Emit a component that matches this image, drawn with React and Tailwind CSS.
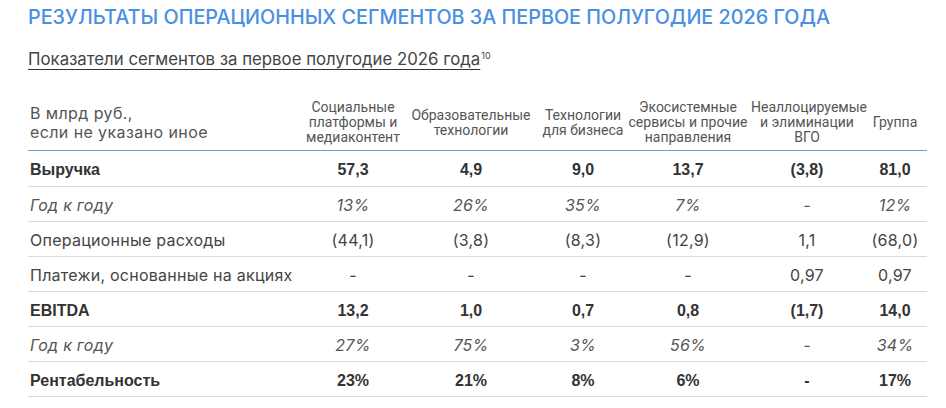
import React from "react";

const cols = "grid grid-cols-[277px_96px_140px_84px_126px_112px_64px]";

const heads = [
  ["Социальные", "платформы и", "медиаконтент"],
  ["Образовательные", "технологии"],
  ["Технологии", "для бизнеса"],
  ["Экосистемные", "сервисы и прочие", "направления"],
  ["Неаллоцируемые", "и элиминации", "ВГО"],
  ["Группа"],
];

const rows = [
  { label: "Выручка", kind: "bold", vals: ["57,3", "4,9", "9,0", "13,7", "(3,8)", "81,0"] },
  { label: "Год к году", kind: "italic", vals: ["13%", "26%", "35%", "7%", "-", "12%"] },
  { label: "Операционные расходы", kind: "plain", vals: ["(44,1)", "(3,8)", "(8,3)", "(12,9)", "1,1", "(68,0)"] },
  { label: "Платежи, основанные на акциях", kind: "plain", vals: ["-", "-", "-", "-", "0,97", "0,97"] },
  { label: "EBITDA", kind: "bold", vals: ["13,2", "1,0", "0,7", "0,8", "(1,7)", "14,0"] },
  { label: "Год к году", kind: "italic", vals: ["27%", "75%", "3%", "56%", "-", "34%"] },
  { label: "Рентабельность", kind: "bold", vals: ["23%", "21%", "8%", "6%", "-", "17%"] },
];

// bold rows use an Arial-width face, the rest a lighter spaced sans
const kindClass = {
  bold: "font-bold text-[#333] font-['Liberation_Sans',Arial,sans-serif] pt-[3px]",
  italic: "italic text-[#555] tracking-[0.25px] pt-[2px]",
  plain: "text-[#444] tracking-[0.25px] pt-[2px]",
};

export default function App() {
  return (
    <div className="w-[946px] h-[408px] overflow-hidden bg-white pl-[28px] font-['Inter',sans-serif]">
      <h1 className="pt-[4px] text-[19.8px] leading-[26px] font-medium text-[#4a90e2] whitespace-nowrap">
        РЕЗУЛЬТАТЫ ОПЕРАЦИОННЫХ СЕГМЕНТОВ ЗА ПЕРВОЕ ПОЛУГОДИЕ 2026 ГОДА
      </h1>

      <p className="mt-[19px] text-[16.8px] leading-[21px] text-[#444] whitespace-nowrap">
        <span className="underline underline-offset-[4px] decoration-[#333]">
          Показатели сегментов за первое полугодие 2026 года
        </span>
        <sup className="text-[9px] ml-[1px] -top-[0.7em]">10</sup>
      </p>

      <div className="mt-[24px] w-[899px]">
        <div className={`${cols} h-[57px] items-center border-b-[1.5px] border-[#6a9fd4]`}>
          <div className="text-[16px] leading-[19px] tracking-[0.4px] text-[#555] pl-[2px] pt-[1px]">
            В млрд руб.,
            <br />
            если не указано иное
          </div>
          {heads.map((h, i) => (
            <div
              key={i}
              className="text-center text-[14px] leading-[15px] text-[#555] whitespace-nowrap font-['Roboto',sans-serif] pt-[1px]"
            >
              {h.map((line, j) => (
                <div key={j}>{line}</div>
              ))}
            </div>
          ))}
        </div>

        {rows.map((r, i) => (
          <div
            key={i}
            className={`${cols} ${i === 0 ? "h-[36px]" : "h-[35px]"} items-center border-b border-[#d9d9d9] text-[16px] ${kindClass[r.kind]}`}
          >
            <div className="pl-[2px] whitespace-nowrap">{r.label}</div>
            {r.vals.map((v, j) => (
              <div key={j} className="text-center">
                {v}
              </div>
            ))}
          </div>
        ))}
      </div>
    </div>
  );
}
